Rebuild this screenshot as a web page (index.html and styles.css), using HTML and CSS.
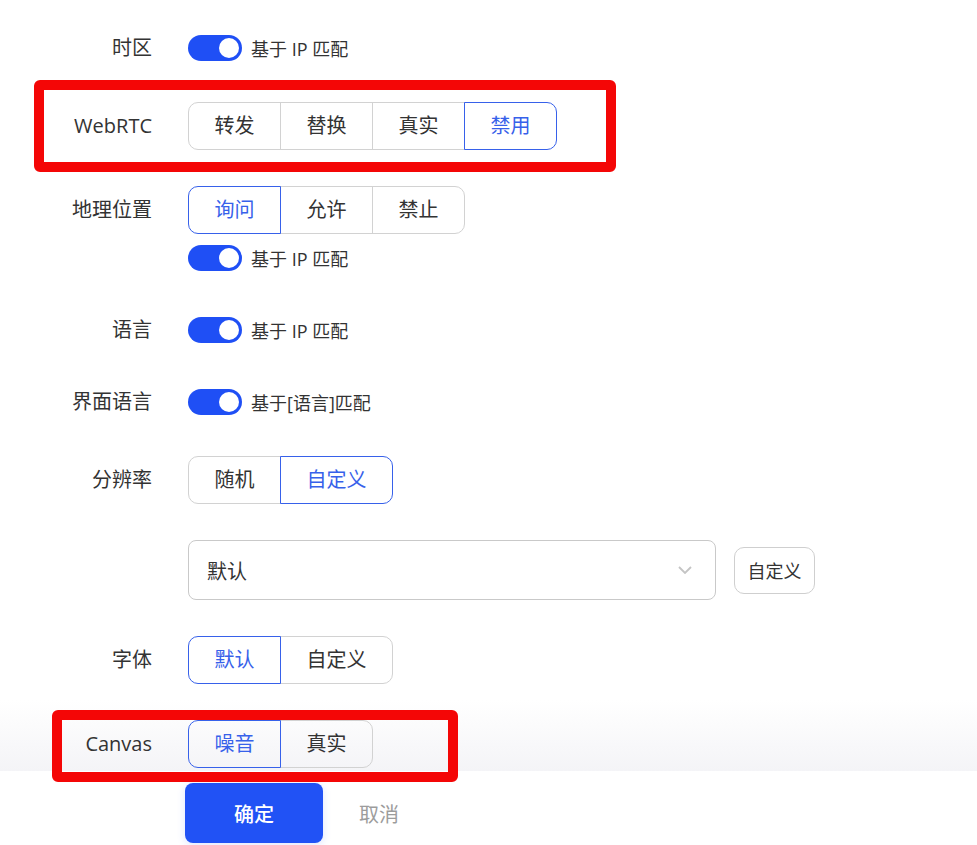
FILE: index.html
```html
<!DOCTYPE html>
<html lang="zh-CN">
<head>
    <meta charset="UTF-8">
    <meta name="viewport" content="width=device-width, initial-scale=1.0">
    <title>浏览器指纹设置</title>
    <link rel="stylesheet" href="styles.css">
</head>
<body>
    <div class="page">
        <div class="form">
            <div class="row row-line">
                <div class="label">时区</div>
                <div class="switch-line"><span class="switch"></span><span class="switch-text">基于 IP 匹配</span></div>
            </div>

            <div class="row marked mark-webrtc">
                <div class="label">WebRTC</div>
                <div class="seg">
                    <span class="seg-item">转发</span>
                    <span class="seg-item">替换</span>
                    <span class="seg-item">真实</span>
                    <span class="seg-item active">禁用</span>
                </div>
            </div>

            <div class="row">
                <div class="label">地理位置</div>
                <div class="control-col">
                    <div class="seg">
                        <span class="seg-item active">询问</span>
                        <span class="seg-item">允许</span>
                        <span class="seg-item">禁止</span>
                    </div>
                    <div class="switch-line sub"><span class="switch"></span><span class="switch-text">基于 IP 匹配</span></div>
                </div>
            </div>

            <div class="row row-line">
                <div class="label">语言</div>
                <div class="switch-line"><span class="switch"></span><span class="switch-text">基于 IP 匹配</span></div>
            </div>

            <div class="row row-line">
                <div class="label">界面语言</div>
                <div class="switch-line"><span class="switch"></span><span class="switch-text">基于[语言]匹配</span></div>
            </div>

            <div class="row">
                <div class="label">分辨率</div>
                <div class="seg">
                    <span class="seg-item">随机</span>
                    <span class="seg-item active">自定义</span>
                </div>
            </div>

            <div class="row">
                <div class="label"></div>
                <div class="select-line">
                    <div class="select">
                        <span>默认</span>
                        <svg class="chevron" width="14" height="8" viewBox="0 0 14 8"><polyline points="1,1 7,7 13,1" fill="none" stroke="#c4c4c4" stroke-width="1.8"/></svg>
                    </div>
                    <button class="btn-plain">自定义</button>
                </div>
            </div>

            <div class="row">
                <div class="label">字体</div>
                <div class="seg">
                    <span class="seg-item active">默认</span>
                    <span class="seg-item">自定义</span>
                </div>
            </div>

            <div class="row marked mark-canvas">
                <div class="label">Canvas</div>
                <div class="seg">
                    <span class="seg-item active">噪音</span>
                    <span class="seg-item">真实</span>
                </div>
            </div>
        </div>

        <div class="footer">
            <button class="btn-primary">确定</button>
            <button class="btn-text">取消</button>
        </div>
    </div>
</body>
</html>
```

FILE: styles.css
```css
body {
    margin: 0;
    padding: 0;
    background-color: #fff;
    color: #333;
    font-family: "Open Sans", "Noto Sans CJK SC", sans-serif;
}
.page {
    height: 845px;
    display: flex;
    flex-direction: column;
    overflow: hidden;
}
.form {
    height: 771px;
    padding-top: 30px;
    box-sizing: border-box;
    flex-shrink: 0;
    background: linear-gradient(to bottom, #fff 700px, #f4f4f7 771px);
}
.row {
    position: relative;
    display: flex;
    align-items: flex-start;
    margin-bottom: 36px;
}
.label {
    width: 152px;
    margin-right: 36px;
    flex-shrink: 0;
    text-align: right;
    font-size: 20px;
    line-height: 48px;
    color: #333;
}
.row-line .label {
    line-height: 36px;
}
.switch-line {
    display: flex;
    align-items: center;
    height: 36px;
    gap: 9px;
}
.switch-line.sub {
    margin-top: 6px;
}
.switch {
    position: relative;
    width: 54px;
    height: 26px;
    border-radius: 13px;
    background-color: #1f4ff5;
}
.switch::after {
    content: "";
    position: absolute;
    right: 3px;
    top: 3px;
    width: 20px;
    height: 20px;
    border-radius: 50%;
    background-color: #fff;
}
.switch-text {
    font-size: 18px;
    color: #333;
}
.control-col {
    display: flex;
    flex-direction: column;
}
.seg {
    display: flex;
    height: 48px;
    align-self: flex-start;
}
.seg-item {
    position: relative;
    box-sizing: border-box;
    height: 48px;
    padding: 0 25.5px;
    margin-left: -1px;
    border: 1px solid #d2d2d2;
    text-align: center;
    font-size: 20px;
    line-height: 46px;
    color: #333;
}
.seg-item:first-child {
    margin-left: 0;
    border-radius: 10px 0 0 10px;
}
.seg-item:last-child {
    border-radius: 0 10px 10px 0;
}
.seg-item.active {
    z-index: 1;
    border-color: #3761ea;
    color: #3761ea;
}
.select-line {
    display: flex;
    align-items: center;
    gap: 18px;
}
.select {
    box-sizing: border-box;
    width: 528px;
    height: 60px;
    padding: 0 23px 0 18px;
    border: 1px solid #c9c9c9;
    border-radius: 8px;
    display: flex;
    align-items: center;
    justify-content: space-between;
    font-size: 20px;
    color: #333;
}
.btn-plain {
    box-sizing: border-box;
    width: 81px;
    height: 47px;
    border: 1px solid #cfcfcf;
    border-radius: 10px;
    background-color: #fff;
    font-family: inherit;
    font-size: 18px;
    color: #333;
    padding: 0;
}
.marked::after {
    content: "";
    position: absolute;
    z-index: 3;
    border: 10px solid #f40606;
    border-radius: 6px;
    pointer-events: none;
}
.mark-webrtc::after {
    left: 34px;
    top: -22px;
    width: 562px;
    height: 72px;
}
.mark-canvas::after {
    left: 52px;
    top: -10px;
    width: 386px;
    height: 52px;
}
.footer {
    flex: 1;
    display: flex;
    align-items: flex-start;
    padding: 12px 0 0 185px;
    gap: 36px;
    background-color: #fff;
}
.btn-primary {
    width: 138px;
    height: 60px;
    border: none;
    border-radius: 8px;
    background-color: #2152f5;
    color: #fff;
    font-family: inherit;
    font-size: 20px;
    font-weight: 500;
    box-shadow: 0 2px 8px rgba(33, 82, 245, 0.15);
}
.btn-text {
    height: 60px;
    border: none;
    background: none;
    padding: 0;
    font-family: inherit;
    font-size: 20px;
    color: #9c9c9c;
}
```
